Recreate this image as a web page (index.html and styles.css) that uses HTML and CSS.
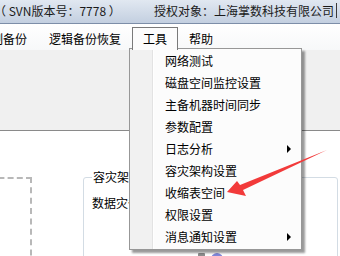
FILE: index.html
```html
<!DOCTYPE html>
<html lang="zh-CN">
<head>
  <meta charset="UTF-8">
  <title>工具菜单</title>
  <link rel="stylesheet" href="styles.css">
</head>
<body>
  <div class="window">
    <div class="titlebar">
      <span class="version">（ SVN版本号：7778 ）</span>
      <span class="owner">授权对象：上海掌数科技有限公司</span>
      <span class="edge"></span>
    </div>
    <div class="menubar">
      <span class="menu first">控制备份</span>
      <span class="menu">逻辑备份恢复</span>
      <span class="menu active">工具</span>
      <span class="menu">帮助</span>
    </div>
    <div class="toolbar"></div>
    <div class="content">
      <div class="dashed"></div>
      <div class="group">
        <span class="group-title">容灾架构设置</span>
        <div class="group-text">数据灾备方案</div>
        <div class="icons">
          <span class="icon-gray"></span>
          <span class="icon-blue"></span>
        </div>
      </div>
    </div>

    <div class="dropdown">
      <div class="item">网络测试</div>
      <div class="item">磁盘空间监控设置</div>
      <div class="item">主备机器时间同步</div>
      <div class="item">参数配置</div>
      <div class="item sub">日志分析</div>
      <div class="item">容灾架构设置</div>
      <div class="item">收缩表空间</div>
      <div class="item">权限设置</div>
      <div class="item sub">消息通知设置</div>
    </div>

    <svg class="arrow" width="340" height="256" viewBox="0 0 340 256">
      <polygon points="227,192 237,181 240,185 327,150 243,190 246,196" fill="#f23a3a"/>
    </svg>
  </div>
</body>
</html>
```

FILE: styles.css
```css
* {
  margin: 0;
  padding: 0;
  box-sizing: border-box;
}
body {
  width: 340px;
  height: 256px;
  overflow: hidden;
  font-family: "Noto Sans CJK SC", "Noto Sans", sans-serif;
  font-size: 12px;
  color: #000;
  background: #fff;
}
.window {
  position: relative;
  width: 340px;
  height: 256px;
  overflow: hidden;
}
.titlebar {
  height: 24px;
  display: flex;
  align-items: center;
  padding-bottom: 2px;
  background: linear-gradient(#e1e8f1, #c3cfe0);
  border-bottom: 1px solid #7d8ea8;
  color: #1a1a1a;
  white-space: nowrap;
}
.version {
  margin-left: -6px;
}
.owner {
  margin-left: auto;
}
.edge {
  width: 1px;
  height: 15px;
  margin: 0 3px 0 2px;
  background: #3a3a3a;
}
.menubar {
  height: 26px;
  display: flex;
  align-items: flex-end;
  background: linear-gradient(#fff, #f7f8f9);
  white-space: nowrap;
}
.menu {
  height: 23px;
  line-height: 21px;
  padding: 0 10px;
  border: 1px solid transparent;
  border-bottom: none;
}
.menu.first {
  margin-left: -32px;
}
.menu.active {
  border-color: #7a7a7a;
  background: #fcfcfc;
  position: relative;
  z-index: 2;
}
.toolbar {
  height: 81px;
  background: #f0f0f0;
  border-bottom: 1px solid #8a8a8a;
}
.content {
  display: flex;
  padding-top: 46px;
}
.dashed {
  width: 52px;
  height: 120px;
  margin-left: -20px;
  border: 2px dashed #b8b8b8;
}
.group {
  width: 255px;
  height: 120px;
  margin-left: 51px;
  border: 1px solid #d3dce4;
  border-radius: 3px;
  padding-left: 8px;
}
.group-title {
  display: inline-block;
  margin-top: -9px;
  padding: 0 1px;
  background: #fff;
  line-height: 16px;
  vertical-align: top;
}
.group-text {
  margin-top: 0;
  line-height: 16px;
}
.icons {
  display: flex;
  align-items: flex-start;
  gap: 6px;
  margin: 42px 0 0 106px;
}
.icon-gray {
  width: 7px;
  height: 8px;
  background: #8d8d8d;
  border-radius: 1px;
}
.icon-blue {
  width: 12px;
  height: 12px;
  border-radius: 50%;
  background: #7f86d8;
}
.dropdown {
  position: absolute;
  left: 129px;
  top: 48px;
  width: 173px;
  padding: 1px 0;
  border: 1px solid #979797;
  background: linear-gradient(90deg, #f1f1f1 0, #f1f1f1 22px, #e3e3e3 22px, #e3e3e3 23px, #fff 23px, #fff 24px, #fcfcfc 24px);
  box-shadow: 3px 3px 2px rgba(0, 0, 0, 0.4);
  z-index: 1;
}
.item {
  height: 22px;
  line-height: 22px;
  padding: 0 10px 0 35px;
  display: flex;
  align-items: center;
  white-space: nowrap;
}
.item.sub::after {
  content: "";
  margin-left: auto;
  border-left: 4px solid #000;
  border-top: 4px solid transparent;
  border-bottom: 4px solid transparent;
}
.arrow {
  position: absolute;
  left: 0;
  top: 0;
  z-index: 3;
}
```
